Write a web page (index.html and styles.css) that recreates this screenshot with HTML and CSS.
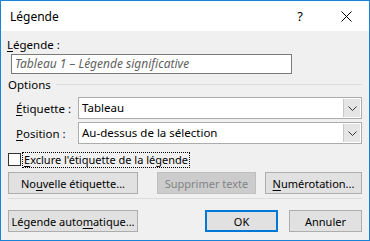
FILE: index.html
```html
<!DOCTYPE html>
<html lang="fr">
<head>
<meta charset="utf-8">
<title>Légende</title>
<link rel="stylesheet" href="styles.css">
</head>
<body>
<div class="window">
  <div class="titlebar">
    <span class="title">Légende</span>
    <span class="help">?</span>
    <span class="close">
      <svg width="11" height="11" viewBox="0 0 11 11"><path d="M0.5 0.5 L10.5 10.5 M10.5 0.5 L0.5 10.5" stroke="#000" stroke-width="1" fill="none"/></svg>
    </span>
  </div>
  <div class="content">
    <div class="caption-label"><u>L</u>égende :</div>
    <div class="caption-input">Tableau 1 – Légende significative</div>
    <div class="group-head">
      <span class="group-title">Options</span>
      <span class="group-line"></span>
    </div>
    <div class="field">
      <span class="field-label"><u>É</u>tiquette :</span>
      <div class="combo">
        <span class="combo-text">Tableau</span>
        <span class="combo-btn"><svg width="9" height="5" viewBox="0 0 9 5"><path d="M0.5 0.5 L4.5 4.5 L8.5 0.5" stroke="#333" fill="none"/></svg></span>
      </div>
    </div>
    <div class="field">
      <span class="field-label"><u>P</u>osition :</span>
      <div class="combo">
        <span class="combo-text">Au-dessus de la sélection</span>
        <span class="combo-btn"><svg width="9" height="5" viewBox="0 0 9 5"><path d="M0.5 0.5 L4.5 4.5 L8.5 0.5" stroke="#333" fill="none"/></svg></span>
      </div>
    </div>
    <div class="check-row">
      <span class="checkbox"></span>
      <span class="check-label"><u>E</u>xclure l'étiquette de la légende</span>
    </div>
    <div class="btn-row">
      <button class="btn w130">No<u>u</u>velle étiquette...</button>
      <button class="btn w99 disabled gap19">Supprimer texte</button>
      <button class="btn w97 gap9"><u>N</u>umérotation...</button>
    </div>
    <div class="separator"></div>
    <div class="btn-row bottom">
      <button class="btn w130">Légende auto<u>m</u>atique...</button>
      <span class="spacer"></span>
      <button class="btn w73 default">OK</button>
      <button class="btn w73 gap11">Annuler</button>
    </div>
  </div>
</div>
</body>
</html>
```
FILE: styles.css
```css
* { box-sizing: border-box; }
html, body { margin: 0; padding: 0; }
body {
  font-family: "Noto Sans", "Open Sans", sans-serif;
  font-size: 11px;
  color: #000;
  background: #fff;
}
u { text-decoration: underline; text-underline-offset: 2px; }
.window {
  width: 370px;
  height: 241px;
  border: 1px solid #1883d7;
  background: #f0f0f0;
  display: flex;
  flex-direction: column;
}
.titlebar {
  height: 30px;
  background: #fff;
  display: flex;
  align-items: center;
  padding-left: 9px;
}
.title { font-size: 12px; flex: 1; }
.help { font-size: 13px; width: 46px; text-align: center; margin-top: -1px; }
.close { width: 46px; display: flex; justify-content: center; padding-top: 1px; }
.content {
  padding: 6px 7px 0 6px;
  display: flex;
  flex-direction: column;
}
.caption-label { height: 16px; line-height: 16px; font-size: 11.5px; }
.caption-input {
  margin: 1px 0 0 4px;
  width: 281px;
  height: 20px;
  border: 1px solid #7a7a7a;
  background: #fff;
  font-style: italic;
  color: #5f5f5f;
  padding-left: 3px;
  line-height: 18px;
  font-size: 12px;
  white-space: nowrap;
}
.group-head {
  display: flex;
  align-items: center;
  margin-top: 2px;
  height: 16px;
}
.group-title { margin-left: 1px; margin-right: 5px; font-size: 11.5px; }
.group-line { flex: 1; height: 1px; background: #dcdcdc; margin-top: 1px; }
.field {
  display: flex;
  align-items: center;
  margin-top: 5px;
  height: 22px;
  font-size: 11.5px;
}
.field + .field { margin-top: 3px; }
.field-label { width: 71px; padding-left: 9px; white-space: nowrap; }
.combo {
  flex: 1;
  height: 22px;
  border: 1px solid #acacac;
  background: #fff;
  display: flex;
  align-items: stretch;
}
.combo-text { flex: 1; padding-left: 3px; line-height: 20px; white-space: nowrap; }
.combo-btn {
  width: 17px;
  margin: 1px;
  background: #e5e5e5;
  border-left: 1px solid #c8c8c8;
  display: flex;
  align-items: center;
  justify-content: center;
}
.check-row {
  display: flex;
  align-items: center;
  margin-top: 8px;
  height: 15px;
}
.checkbox {
  width: 13px;
  height: 13px;
  border: 1px solid #333;
  background: #fff;
  margin-left: 1px;
  margin-right: 2px;
  flex: none;
}
.check-label {
  outline: 1px dotted #000;
  outline-offset: 0;
  padding: 0 1px;
  line-height: 14px;
  white-space: nowrap;
}
.btn-row {
  display: flex;
  margin-top: 5px;
  padding-left: 1px;
}
.btn {
  height: 22px;
  font-family: inherit;
  font-size: 11px;
  border: 1px solid #adadad;
  background: #e1e1e1;
  color: #000;
  padding: 0;
  margin: 0;
  white-space: nowrap;
  flex: none;
}
.w130 { width: 130px; }
.w99 { width: 99px; }
.w97 { width: 97px; }
.w73 { width: 73px; }
.gap19 { margin-left: 19px; }
.gap9 { margin-left: 9px; }
.gap11 { margin-left: 11px; }
.disabled { background: #cccccc; border-color: #bfbfbf; color: #838383; }
.default { border: 2px solid #0078d7; }
.separator { height: 1px; background: #dcdcdc; margin-top: 4px; margin-left: 1px; }
.btn-row.bottom { margin-top: 11px; }
.spacer { flex: 1; }
```
